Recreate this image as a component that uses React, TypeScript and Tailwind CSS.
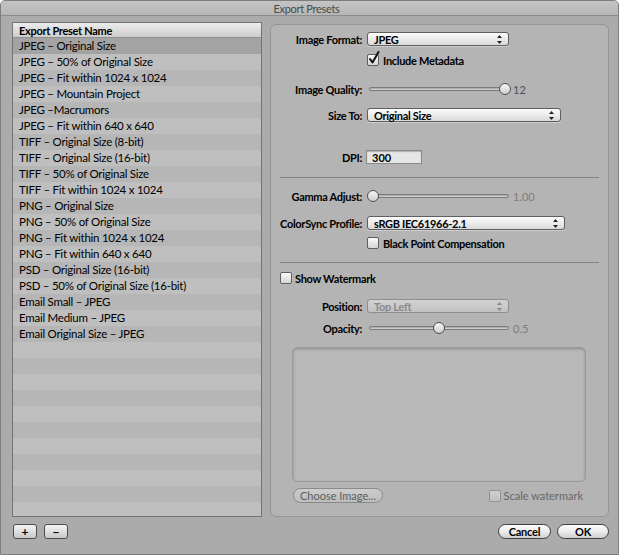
import React from "react";

const presets = [
  "JPEG – Original Size",
  "JPEG – 50% of Original Size",
  "JPEG – Fit within 1024 x 1024",
  "JPEG – Mountain Project",
  "JPEG –Macrumors",
  "JPEG – Fit within 640 x 640",
  "TIFF – Original Size (8-bit)",
  "TIFF – Original Size (16-bit)",
  "TIFF – 50% of Original Size",
  "TIFF – Fit within 1024 x 1024",
  "PNG – Original Size",
  "PNG – 50% of Original Size",
  "PNG – Fit within 1024 x 1024",
  "PNG – Fit within 640 x 640",
  "PSD – Original Size (16-bit)",
  "PSD – 50% of Original Size (16-bit)",
  "Email Small – JPEG",
  "Email Medium – JPEG",
  "Email Original Size – JPEG",
];

// little up/down arrows at the end of a popup
const Arrows = ({ color = "#222" }: { color?: string }) => (
  <svg width="5" height="9" viewBox="0 0 5 9">
    <path d="M2.5 0 L5 3 L0 3 Z" fill={color} />
    <path d="M2.5 9 L5 6 L0 6 Z" fill={color} />
  </svg>
);

const Popup = ({ value, width, disabled = false }: { value: string; width: number; disabled?: boolean }) => (
  <div
    className={
      "h-[14px] flex items-center justify-between pl-[6px] pr-[6px] rounded-[3px] border " +
      (disabled
        ? "border-[#8e8e8e] bg-gradient-to-b from-[#d2d2d2] to-[#c2c2c2] text-[#8a8a8a]"
        : "border-[#5e5e5e] bg-gradient-to-b from-[#fcfcfc] via-[#ececec] to-[#d9d9d9] text-black shadow-[0_1px_0_rgba(255,255,255,0.35)]")
    }
    style={{ width }}
  >
    <span className="text-[11px] font-bold leading-none tracking-[-0.3px]">{value}</span>
    <Arrows color={disabled ? "#8a8a8a" : "#222"} />
  </div>
);

const Checkbox = ({ checked = false, disabled = false }: { checked?: boolean; disabled?: boolean }) => (
  <div className="relative w-[12px] h-[12px] shrink-0">
    <div
      className={
        "w-[12px] h-[12px] rounded-[2px] border " +
        (disabled
          ? "border-[#939393] bg-gradient-to-b from-[#cfcfcf] to-[#c2c2c2]"
          : "border-[#5f5f5f] bg-gradient-to-b from-[#fafafa] to-[#d6d6d6]")
      }
    />
    {checked && (
      <svg className="absolute left-[1px] top-[-3px]" width="12" height="14" viewBox="0 0 12 14">
        <path d="M2 8 L4.5 11.5 L10.5 1" stroke="#111" strokeWidth="2" fill="none" strokeLinecap="round" strokeLinejoin="round" />
      </svg>
    )}
  </div>
);

const Slider = ({ pos, value, dim = false }: { pos: number; value: string; dim?: boolean }) => (
  <div className="flex items-center gap-[2px]">
    <div className="relative w-[144px] h-[12px]">
      <div className="absolute left-[2px] right-[2px] top-[4px] h-[4px] rounded-full border border-[#7b7b7b] bg-gradient-to-b from-[#a0a0a0] to-[#dadada]" />
      <div
        className="absolute top-[0px] w-[12px] h-[12px] rounded-full border border-[#4f4f4f] bg-gradient-to-b from-[#f6f6f6] to-[#cfcfcf]"
        style={{ left: pos * 132 }}
      />
    </div>
    <span className={"text-[11px] leading-none " + (dim ? "text-[#7c7c7c]" : "text-[#4e4e5e]")}>{value}</span>
  </div>
);

const Label = ({ children }: { children: React.ReactNode }) => (
  <div className="w-[91px] text-right text-[11px] font-bold text-black leading-none tracking-[-0.3px] shrink-0">{children}</div>
);

const PillButton = ({ children, width, disabled = false }: { children: React.ReactNode; width: number; disabled?: boolean }) => (
  <div
    className={
      "h-[15px] rounded-full border flex items-center justify-center text-[11px] leading-none " +
      (disabled
        ? "border-[#8a8a8a] bg-gradient-to-b from-[#cdcdcd] to-[#bdbdbd] text-[#5e5e5e]"
        : "border-[#3f3f3f] bg-gradient-to-b from-[#fdfdfd] via-[#ececec] to-[#cfcfcf] text-black font-bold tracking-[-0.2px]")
    }
    style={{ width }}
  >
    {children}
  </div>
);

const SquareButton = ({ children }: { children: React.ReactNode }) => (
  <div className="w-[24px] h-[15px] rounded-[3px] border border-[#4d4d4d] bg-gradient-to-b from-[#f5f5f5] to-[#c9c9c9] flex items-center justify-center text-[12px] font-bold leading-none text-black">
    {children}
  </div>
);

export default function App() {
  const rows = Array.from({ length: 30 }, (_, i) => presets[i] ?? "");

  return (
    <div className="w-[619px] h-[555px] bg-[#ababab] border border-[#7e7e7e] rounded-t-[5px] overflow-hidden flex flex-col font-[Lato,'Liberation_Sans',sans-serif] text-black">
      {/* Title bar */}
      <div className="h-[15px] shrink-0 bg-gradient-to-b from-[#c4c4c4] to-[#b6b6b6] border-b border-[#8c8c8c] flex items-center justify-center">
        <span className="text-[11px] leading-none text-[#4a4a4a] tracking-[-0.3px] pr-[6px]">Export Presets</span>
      </div>

      <div className="flex pl-[11px] pt-[6px] gap-[8px]">
        {/* Preset list */}
        <div className="w-[250px] h-[495px] border border-[#747474] bg-[#b8b8b8] flex flex-col overflow-hidden">
          <div className="h-[15px] shrink-0 bg-gradient-to-b from-[#ececec] to-[#cdcdcd] border-b border-[#8f8f8f] flex items-center pl-[6px]">
            <span className="text-[11px] font-bold leading-none tracking-[-0.3px]">Export Preset Name</span>
          </div>
          {rows.map((name, i) => (
            <div
              key={i}
              className={
                "h-[16px] shrink-0 flex items-center pl-[6px] text-[11.5px] tracking-[-0.25px] leading-none " +
                (i === 0 ? "bg-[#a3a3a3]" : i % 2 === 0 ? "bg-[#b6b6b6]" : "bg-[#bfbfbf]")
              }
            >
              {name}
            </div>
          ))}
        </div>

        {/* Settings panel */}
        <div className="mt-[2px] w-[339px] h-[493px] rounded-[6px] border border-[#959595] bg-[#b4b4b4] flex flex-col">
          <div className="h-[7px] shrink-0" />
          <div className="h-[14px] shrink-0 flex items-center gap-[5px]">
            <Label>Image Format:</Label>
            <Popup value="JPEG" width={142} />
          </div>
          <div className="h-[8px] shrink-0" />
          <div className="h-[12px] shrink-0 flex items-center gap-[4px] pl-[96px]">
            <Checkbox checked />
            <span className="text-[11px] font-bold leading-none tracking-[-0.3px]">Include Metadata</span>
          </div>
          <div className="h-[17px] shrink-0" />
          <div className="h-[12px] shrink-0 flex items-center gap-[5px]">
            <Label>Image Quality:</Label>
            <Slider pos={1} value="12" />
          </div>
          <div className="h-[13px] shrink-0" />
          <div className="h-[14px] shrink-0 flex items-center gap-[5px]">
            <Label>Size To:</Label>
            <Popup value="Original Size" width={194} />
          </div>
          <div className="h-[28px] shrink-0" />
          <div className="h-[14px] shrink-0 flex items-center gap-[4px]">
            <Label>DPI:</Label>
            <div className="w-[56px] h-[14px] border border-[#8a8a8a] bg-[#e6e6e6] shadow-[inset_0_1px_1px_rgba(0,0,0,0.25)] flex items-center pl-[5px]">
              <span className="text-[11px] font-bold leading-none">300</span>
            </div>
          </div>
          <div className="h-[13px] shrink-0" />
          <div className="mx-[9px] h-[1px] shrink-0 bg-[#838383]" />
          <div className="h-[12px] shrink-0" />
          <div className="h-[12px] shrink-0 flex items-center gap-[5px]">
            <Label>Gamma Adjust:</Label>
            <Slider pos={0} value="1.00" dim />
          </div>
          <div className="h-[14px] shrink-0" />
          <div className="h-[14px] shrink-0 flex items-center gap-[5px]">
            <Label>ColorSync Profile:</Label>
            <Popup value="sRGB IEC61966-2.1" width={198} />
          </div>
          <div className="h-[7px] shrink-0" />
          <div className="h-[12px] shrink-0 flex items-center gap-[4px] pl-[96px]">
            <Checkbox />
            <span className="text-[11px] font-bold leading-none tracking-[-0.3px]">Black Point Compensation</span>
          </div>
          <div className="h-[13px] shrink-0" />
          <div className="mx-[9px] h-[1px] shrink-0 bg-[#838383]" />
          <div className="h-[9px] shrink-0" />
          <div className="h-[12px] shrink-0 flex items-center gap-[3px] pl-[9px]">
            <Checkbox />
            <span className="text-[11px] font-bold leading-none tracking-[-0.3px]">Show Watermark</span>
          </div>
          <div className="h-[15px] shrink-0" />
          <div className="h-[14px] shrink-0 flex items-center gap-[5px]">
            <Label>Position:</Label>
            <Popup value="Top Left" width={142} disabled />
          </div>
          <div className="h-[9px] shrink-0" />
          <div className="h-[12px] shrink-0 flex items-center gap-[5px]">
            <Label>Opacity:</Label>
            <Slider pos={0.5} value="0.5" dim />
          </div>
          <div className="h-[13px] shrink-0" />
          <div className="ml-[21px] w-[294px] h-[135px] shrink-0 rounded-[5px] border border-[#9a9a9a] bg-[#b9b9b9] shadow-[inset_0_1px_3px_rgba(0,0,0,0.25)]" />
          <div className="h-[6px] shrink-0" />
          <div className="h-[15px] shrink-0 flex items-center justify-between pl-[22px] pr-[25px]">
            <PillButton width={90} disabled>Choose Image...</PillButton>
            <div className="flex items-center gap-[3px]">
              <Checkbox disabled />
              <span className="text-[11px] leading-none text-[#666666]">Scale watermark</span>
            </div>
          </div>
        </div>
      </div>

      {/* Bottom buttons */}
      <div className="flex items-center justify-between pl-[12px] pr-[9px] mt-[7px]">
        <div className="flex gap-[7px]">
          <SquareButton>+</SquareButton>
          <SquareButton>−</SquareButton>
        </div>
        <div className="flex gap-[6px]">
          <PillButton width={53}>Cancel</PillButton>
          <PillButton width={52}>OK</PillButton>
        </div>
      </div>
    </div>
  );
}
